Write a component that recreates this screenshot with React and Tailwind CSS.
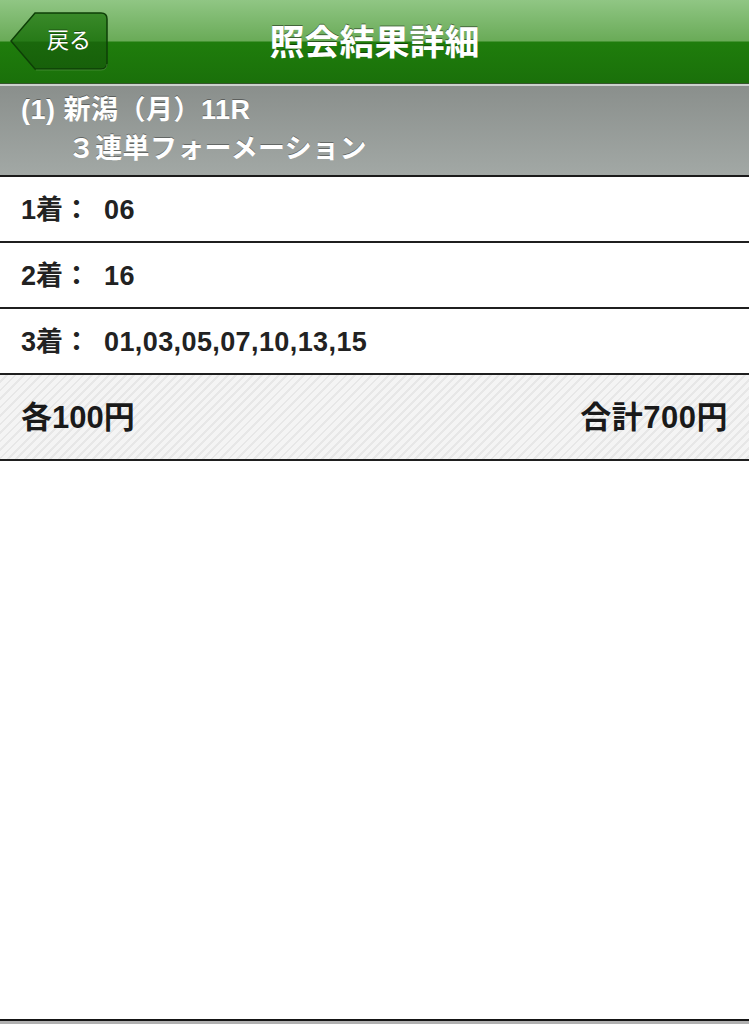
export default function App() {
  const font = { fontFamily: '"Liberation Sans", "Noto Sans CJK JP", sans-serif' };
  const rows = [
    ["1着：", "06"],
    ["2着：", "16"],
    ["3着：", "01,03,05,07,10,13,15"],
  ];
  return (
    <div className="flex min-h-[1024px] w-[749px] flex-col bg-white" style={font}>
      {/* Header */}
      <div className="relative flex h-[84px] items-center justify-center border-b border-[#35552c] bg-[linear-gradient(#90c684,#6aab58_49%,#1f7d0c_51%,#1a700a)]">
        <div className="absolute left-[10px] top-[12px] h-[59px] w-[98px]">
          <svg className="absolute inset-0" width="98" height="59" viewBox="0 0 98 59">
            <defs>
              <linearGradient id="bb" x1="0" y1="0" x2="0" y2="1">
                <stop offset="0" stopColor="#3a8a2a" />
                <stop offset="0.5" stopColor="#277a18" />
                <stop offset="0.52" stopColor="#1a680c" />
                <stop offset="1" stopColor="#17600a" />
              </linearGradient>
            </defs>
            <path d="M25 1 H91 Q97 1 97 7 V51 Q97 57 91 57 H25 L1 29 Z" fill="url(#bb)" stroke="#0e3f07" strokeWidth="1.5" />
            <path d="M26 58 H91 Q97 58 97 52" fill="none" stroke="#5a9a4a" strokeWidth="1" opacity="0.6" />
          </svg>
          <span className="absolute left-[20px] right-0 top-0 flex h-[57px] items-center justify-center text-[22px] text-white [text-shadow:0_-1px_0_rgba(0,0,0,0.4)]">
            戻る
          </span>
        </div>
        <h1 className="pt-[2px] text-[35px] font-bold leading-none text-white [text-shadow:0_-1px_0_rgba(0,0,0,0.45)]">
          照会結果詳細
        </h1>
      </div>

      {/* Gray band */}
      <div className="flex h-[93px] flex-col border-t-2 border-b-2 border-t-[#cdd1cf] border-b-[#1a1a1a] bg-[linear-gradient(#8a8f8c,#a2a8a5)] px-[21px] pt-[5px] text-white [text-shadow:0_-1px_0_rgba(0,0,0,0.35)]">
        <div className="text-[27px] font-bold leading-[39px] tracking-[0.5px]">(1) 新潟（月）11R</div>
        <div className="pl-[47px] text-[27px] font-bold leading-[39px] tracking-[0.3px]">３連単フォーメーション</div>
      </div>

      {/* Rows */}
      {rows.map(([k, v]) => (
        <div key={k} className="flex h-[66px] items-center border-b-2 border-[#1f1f1f] px-[21px] pt-[3px] text-[27px] font-bold text-[#222]">
          <span className="w-[83px]">{k}</span>
          <span className="tracking-[0.4px]">{v}</span>
        </div>
      ))}

      {/* Footer summary */}
      <div className="flex h-[86px] items-center justify-between border-b-2 border-[#1f1f1f] bg-[repeating-linear-gradient(135deg,#f4f4f4_0px,#f4f4f4_4px,#e7e7e7_4px,#e7e7e7_6px)] px-[21px] pt-[3px] text-[31px] font-bold text-[#1a1a1a]">
        <span>各100円</span>
        <span className="tracking-[0.5px]">合計700円</span>
      </div>

      <div className="flex-1" />

      <div className="h-[5px] border-t-2 border-[#151515] bg-[#b0b0b0]" />
    </div>
  );
}
